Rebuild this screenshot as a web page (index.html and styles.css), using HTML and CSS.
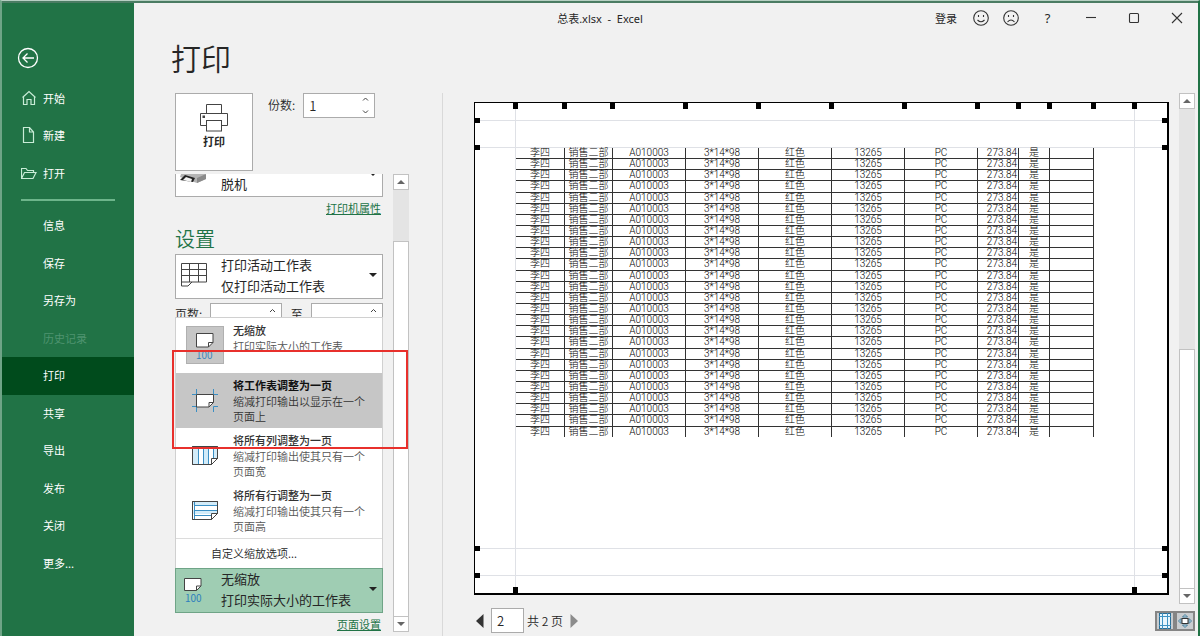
FILE: index.html
```html
<!DOCTYPE html>
<html lang="zh-CN">
<head>
<meta charset="utf-8">
<meta name="viewport" content="width=device-width, initial-scale=1">
<title>总表.xlsx - Excel</title>
<link rel="stylesheet" href="styles.css">
</head>
<body>
<div class="window">
  <nav class="sidebar" aria-label="文件">
    <button class="back" type="button" aria-label="返回">
      <svg width="22" height="22" viewBox="0 0 22 22"><circle cx="11" cy="11" r="9.5"/><path d="M17 11H6M10.500 6.500 6 11l4.500 4.500"/></svg>
    </button>
    <ul class="nav nav-main">
      <li><a href="#home"><svg width="16" height="16" viewBox="0 0 16 16"><path d="M1.500 7.500 8 1.500l6.500 6M2.500 7v7.500h3.500V9.500h4v5h3.500V7"/></svg>开始</a></li>
      <li><a href="#new"><svg width="16" height="16" viewBox="0 0 16 16"><path d="M2.500.5h6l4 4.500v10.500h-10zM8.500.5V5h4"/></svg>新建</a></li>
      <li><a href="#open"><svg width="16" height="16" viewBox="0 0 16 16"><path d="M.5 13.500v-10h4.500l1.500 2h6v2M.5 13.500l3-6h11.500l-3 6z"/></svg>打开</a></li>
    </ul>
    <hr class="nav-rule">
    <ul class="nav nav-sub">
      <li><a href="#info">信息</a></li>
      <li><a href="#save">保存</a></li>
      <li><a href="#saveas">另存为</a></li>
      <li><a class="disabled" href="#history" aria-disabled="true">历史记录</a></li>
      <li><a class="current" href="#print" aria-current="page">打印</a></li>
      <li><a href="#share">共享</a></li>
      <li><a href="#export">导出</a></li>
      <li><a href="#publish">发布</a></li>
      <li><a href="#close">关闭</a></li>
      <li><a href="#more">更多...</a></li>
    </ul>
  </nav>

  <header class="titlebar">
    <span class="doc-name">总表.xlsx&nbsp; -&nbsp; Excel</span>
    <div class="window-tools">
      <button class="sign-in" type="button">登录</button>
      <button class="face" type="button" aria-label="笑脸"><svg width="16" height="16" viewBox="0 0 16 16"><circle cx="8" cy="8" r="7.300"/><path d="M5.500 5v2M10.500 5v2M4.500 10q3.500 3.500 7 0"/></svg></button>
      <button class="face" type="button" aria-label="哭脸"><svg width="16" height="16" viewBox="0 0 16 16"><circle cx="8" cy="8" r="7.300"/><path d="M5.500 5v2M10.500 5v2M4.500 12q3.500-4 7 0"/></svg></button>
      <button class="win-btn help" type="button">?</button>
      <button class="win-btn" type="button" aria-label="最小化"><svg width="12" height="12" viewBox="0 0 12 12"><path d="M1 5.500h10"/></svg></button>
      <button class="win-btn" type="button" aria-label="最大化"><svg width="12" height="12" viewBox="0 0 12 12"><rect x="1.500" y="1.500" width="9" height="9" rx="1"/></svg></button>
      <button class="win-btn" type="button" aria-label="关闭"><svg width="12" height="12" viewBox="0 0 12 12"><path d="M1 1l10 10M11 1 1 11"/></svg></button>
    </div>
  </header>

  <main class="main">
    <h1 class="page-title">打印</h1>
    <div class="columns">
      <section class="settings">
        <div class="print-row">
          <button class="print-btn" type="button">
            <svg width="28" height="28" viewBox="0 0 28 28"><path d="M6.500 9.500v-9h15v9M6.500 21.500h-6v-12h27v12h-6"/><rect x="6.500" y="16.500" width="15" height="10.500"/><rect class="lamp" x="3" y="12" width="1.500" height="1.500"/></svg>
            打印
          </button>
          <label class="copies-label" for="copies">份数:</label>
          <div class="spin">
            <input id="copies" type="text" value="1">
            <span class="spin-arrows"><svg width="7" height="19" viewBox="0 0 7 19"><path d="M1 4.500 3.500 2 6 4.500M1 14.500 3.500 17 6 14.500"/></svg></span>
          </div>
        </div>

        <div class="scroll-area">
          <div class="options">
            <div class="printer-clip">
              <button class="printer" type="button">
                <svg width="30" height="14" viewBox="0 0 30 14"><path fill="#b4b4b4" d="M3 0h20l4 4v4l-9 4-6-2L1 6z"/><path fill="#8a8a8a" d="M18 7l9-4v5l-9 4z"/><path fill="#222" d="M1 9 6 4l10 3-2 4z"/><path fill="#f2f2f2" d="M4 9l3-3 6 2-1 3z"/></svg>
                <span>脱机</span>
                <i class="caret"></i>
              </button>
            </div>
            <a class="link" href="#printer">打印机属性</a>
            <h2 class="section-title">设置</h2>
            <button class="combo" type="button" aria-haspopup="listbox">
              <svg class="combo-icon" width="28" height="26" viewBox="0 0 28 26"><path class="ink" d="M1.500 1.500h25v18.500H12l-4 4H1.500zM1.500 7.500h25M1.500 13.500h25M9.500 1.500v18.500M18.500 1.500v18.500M1.500 20H12"/></svg>
              <span class="combo-text"><span>打印活动工作表</span><span>仅打印活动工作表</span></span>
              <i class="caret"></i>
            </button>
            <div class="pages-row">
              <label for="from">页数:</label>
              <div class="spin"><input id="from" type="text"><span class="spin-arrows"><svg width="7" height="19" viewBox="0 0 7 19"><path d="M1 6 3.500 3.500 6 6M1 14.500 3.500 17 6 14.500"/></svg></span></div>
              <label for="to">至</label>
              <div class="spin"><input id="to" type="text"><span class="spin-arrows"><svg width="7" height="19" viewBox="0 0 7 19"><path d="M1 6 3.500 3.500 6 6M1 14.500 3.500 17 6 14.500"/></svg></span></div>
            </div>

            <div class="scaling">
              <div class="menu" role="listbox" aria-label="缩放">
                <button class="item" type="button" role="option" aria-selected="true">
                  <span class="item-icon picked"><svg width="28" height="32" viewBox="0 0 28 32"><path class="sheet" d="M5.500 4.500h16.500v9l-4.500 4.500h-12z"/><path class="ink" d="M17.500 18v-4.500h4.500"/><text x="5" y="30">100</text></svg></span>
                  <span class="item-text"><b>无缩放</b><span>打印实际大小的工作表</span></span>
                </button>
                <button class="item active" type="button" role="option" aria-selected="false">
                  <span class="item-icon"><svg width="28" height="28" viewBox="0 0 28 28"><path class="blue" d="M1 8.500h4.500V3M22.500 3v5.500H27M1 20.500h4.500V26M22.500 26v-5.500H27"/><path class="sheet" d="M5.500 8.500h17v8l-4.500 4.500H5.500z"/><path class="ink" d="M18 21v-4.500h4.500"/></svg></span>
                  <span class="item-text"><b>将工作表调整为一页</b><span>缩减打印输出以显示在一个页面上</span></span>
                </button>
                <button class="item" type="button" role="option" aria-selected="false">
                  <span class="item-icon"><svg width="28" height="28" viewBox="0 0 28 28"><path class="sheet" d="M1.500 5.500h25v12l-6 6h-19z"/><path class="tint" d="M2 6h5v17H2zM12 6h5v17h-5zM22 6h4v11h-4z"/><path class="blue" d="M7.500 5.500v18M12.500 5.500v18M17.500 5.500v18M22.500 5.500v12"/><path class="ink" d="M1.500 5.500h25v12l-6 6h-19z"/><path class="sheet" d="M20.500 23.500v-6h6z"/></svg></span>
                  <span class="item-text"><b>将所有列调整为一页</b><span>缩减打印输出使其只有一个页面宽</span></span>
                </button>
                <button class="item" type="button" role="option" aria-selected="false">
                  <span class="item-icon"><svg width="28" height="28" viewBox="0 0 28 28"><path class="sheet" d="M1.500 5.500h25v12l-6 6h-19z"/><path class="tint" d="M2 6h24v3H2zM2 14h24v4H2z"/><path class="blue" d="M3.500 5.500v18M3.500 9.500h23M3.500 14.500h23M3.500 19.500h17"/><path class="ink" d="M1.500 5.500h25v12l-6 6h-19z"/><path class="sheet" d="M20.500 23.500v-6h6z"/></svg></span>
                  <span class="item-text"><b>将所有行调整为一页</b><span>缩减打印输出使其只有一个页面高</span></span>
                </button>
                <button class="custom" type="button">自定义缩放选项...</button>
              </div>
              <button class="combo open" type="button" aria-haspopup="listbox" aria-expanded="true">
                <svg class="combo-icon" width="28" height="32" viewBox="0 0 28 32"><path class="sheet" d="M4.500 5.500H21v7.500L16.500 17.500h-12z"/><path class="ink" d="M16.500 17.500V13H21"/><text x="5" y="29">100</text></svg>
                <span class="combo-text"><span>无缩放</span><span>打印实际大小的工作表</span></span>
                <i class="caret"></i>
              </button>
            </div>
            <a class="link" href="#page-setup">页面设置</a>
          </div>
          <div class="scrollbar settings-bar">
            <button type="button" aria-label="向上"><i class="tri up"></i></button>
            <div class="track"><div class="thumb"></div></div>
            <button type="button" aria-label="向下"><i class="tri down"></i></button>
          </div>
        </div>
      </section>

      <section class="preview" aria-label="打印预览">
        <div class="stage">
          <div class="paper">
            <svg class="guides" viewBox="0 0 692 490" preserveAspectRatio="none" aria-hidden="true">
              <path class="guide" d="M40.500 0v490M659.500 0v490M0 17.500h692M0 44.500h692M0 445.500h692M0 472.500h692"/>
              <g id="handles"></g>
            </svg>
            <table class="sheet-table">
              <colgroup><col class="c-name"><col class="c-dept"><col class="c-wide"><col class="c-wide"><col class="c-wide"><col class="c-wide"><col class="c-wide"><col class="c-price"><col class="c-flag"><col class="c-blank"></colgroup>
              <tbody id="rows"></tbody>
            </table>
          </div>
          <div class="scrollbar preview-bar">
            <button type="button" aria-label="上一页"><i class="tri up"></i></button>
            <div class="track"><div class="thumb"></div></div>
            <button type="button" aria-label="下一页"><i class="tri down"></i></button>
          </div>
        </div>
        <footer class="pager">
          <button class="turn" type="button" aria-label="前一页"><svg width="8" height="14" viewBox="0 0 8 14"><path fill="#333" d="M7.500 0v14L0 7z"/></svg></button>
          <input class="page-no" type="text" value="2" aria-label="页码">
          <span class="page-total">共 2 页</span>
          <button class="turn" type="button" aria-label="后一页"><svg width="8" height="14" viewBox="0 0 8 14"><path fill="#8c8c8c" d="M.5 0v14L8 7z"/></svg></button>
          <div class="views">
            <button type="button" aria-label="显示边距"><svg width="14" height="16" viewBox="0 0 14 16"><rect x="1.500" y=".5" width="11" height="15" fill="#e8f6fd" stroke="#2b6f96"/><path stroke="#3e93c4" fill="none" d="M4.500 0v16M9.500 0v16M1 3.500h12M1 12.500h12"/></svg></button>
            <button type="button" aria-label="缩放到页面"><svg width="14" height="14" viewBox="0 0 14 14"><path stroke="#4b7d97" fill="#b9dcec" d="M7 .5 9.500 3h-5zM7 13.500 9.500 11h-5zM.5 7 3 4.500v5zM13.500 7 11 4.500v5z"/><rect x="4" y="4.500" width="6" height="5" fill="#fff" stroke="#333"/></svg></button>
          </div>
        </footer>
      </section>
    </div>
  </main>
</div>
<script src="script.js"></script>
</body>
</html>
```
FILE: styles.css
```css
* { box-sizing: border-box; }

body {
  margin: 0;
  font-family: "Noto Sans CJK SC", sans-serif;
  font-size: 11px;
  font-weight: 350;
  color: #262626;
  background: #f1f1f1;
}

button, input {
  font: inherit;
  color: inherit;
  margin: 0;
  padding: 0;
  border: 0;
  background: none;
  border-radius: 0;
}

svg { display: block; flex: none; }
ul { list-style: none; margin: 0; padding: 0; }

.window {
  display: grid;
  grid-template-columns: 132px 1fr;
  grid-template-rows: 30px 1fr;
  min-height: 100vh;
  border-left: 2px solid #6fa487;
  border-right: 2px solid #217346;
  border-top: 1px solid #b7d0c3;
  box-shadow: inset 0 2px #4b7c63;
  padding-top: 2px;
}

/* Sidebar */
.sidebar {
  grid-column: 1;
  grid-row: 1 / -1;
  background: #217346;
  color: #fff;
  font-weight: 400;
}

.back { display: block; margin: 44px 0 10px 15px; }
.sidebar svg { fill: none; stroke: #fff; stroke-width: 1.3; }
.nav svg { stroke: #c9ecd7; stroke-width: 1.2; }

.nav { display: grid; grid-auto-rows: 1fr; }
.nav-main { height: 113px; }
.nav-sub { height: 375px; }

.nav a {
  display: flex;
  align-items: center;
  gap: 6px;
  height: 100%;
  padding: 0 0 1px 41px;
  color: #fff;
  text-decoration: none;
}
.nav-main a { padding: 0 0 0 19px; }
.nav .current { background: #004b1c; }
.nav .disabled { color: #4f9470; }

.nav-rule {
  height: 2px;
  margin: 7px 19px 6px;
  border: 0;
  background: #6db58b;
}

/* Title bar */
.titlebar {
  grid-column: 1 / -1;
  grid-row: 1;
  display: grid;
  grid-template-columns: 1fr auto 1fr;
  align-items: center;
  font-family: "Noto Sans", "Noto Sans CJK SC", sans-serif;
  font-weight: 400;
}
.doc-name { grid-column: 2; }
.window-tools {
  display: flex;
  align-items: center;
  justify-content: flex-end;
}
.window-tools svg { fill: none; stroke: #333; stroke-width: 1.1; }
.sign-in { margin-right: 9px; }
.face { width: 30px; display: grid; place-items: center; }
.win-btn { width: 43px; display: grid; place-items: center; }
.help { font-size: 13px; }

/* Page */
.main {
  grid-column: 2;
  grid-row: 2;
  display: flex;
  flex-direction: column;
}
.page-title {
  margin: 6px 0 18px 37px;
  font-size: 30px;
  line-height: 36px;
  font-weight: 350;
}
.columns { flex: 1; display: flex; }

.settings {
  width: 268px;
  margin-left: 41px;
  border-right: 1px solid #d9d9d9;
  padding-bottom: 4px;
  display: flex;
  flex-direction: column;
  gap: 3px;
}
.print-row { display: flex; }
.print-btn {
  width: 78px;
  height: 78px;
  padding-bottom: 12px;
  border: 1px solid #ababab;
  background: #fff;
  display: flex;
  flex-direction: column;
  align-items: center;
  justify-content: center;
  gap: 1px;
  font-weight: 700;
}
.print-btn svg { fill: #fff; stroke: #444; }
.print-btn .lamp { fill: #444; }
.copies-label { margin: 4px 8px 0 15px; font-size: 12px; line-height: 16px; }

.spin {
  display: flex;
  align-items: center;
  width: 72px;
  height: 25px;
  border: 1px solid #ababab;
  background: #fff;
}
.spin input { flex: 1; min-width: 0; padding-left: 5px; font-size: 13px; }
.spin-arrows { padding-right: 5px; }
.spin svg { fill: none; stroke: #444; }

.scroll-area { flex: 1; display: flex; gap: 10px; }
.options {
  width: 208px;
  display: flex;
  flex-direction: column;
}

.printer-clip {
  height: 23px;
  overflow: hidden;
  display: flex;
  flex-direction: column;
  justify-content: flex-end;
}
.printer {
  flex: none;
  height: 44px;
  padding: 0 5px 3px 3px;
  border: 1px solid #ababab;
  background: #fff;
  display: flex;
  align-items: flex-end;
  gap: 12px;
  font-size: 13px;
  line-height: 18px;
  font-weight: 400;
}
.printer svg { margin-bottom: 8px; }
.printer .caret { margin: 0 0 17px auto; }

.link {
  align-self: flex-end;
  margin: 3px 2px 0 0;
  line-height: 16px;
  font-weight: 400;
  color: #217346;
}
.section-title {
  margin: 9px 0 1px;
  font-size: 20px;
  line-height: 28px;
  font-weight: 350;
  color: #217346;
}

.combo {
  width: 100%;
  height: 45px;
  padding: 0 5px 3px 4px;
  border: 1px solid #ababab;
  background: #fff;
  display: flex;
  align-items: center;
  gap: 13px;
  font-size: 13px;
  line-height: 21px;
  font-weight: 400;
  text-align: left;
}
.combo.open { background: #9fcdb3; border-color: #6fa487; }
.combo-text { flex: 1; display: grid; }
.caret {
  flex: none;
  border: 4px solid transparent;
  border-top-color: #222;
  border-bottom: 0;
}

.pages-row {
  display: flex;
  justify-content: space-between;
  margin-top: 4px;
  font-size: 12px;
  line-height: 22px;
}

.ink { fill: none; stroke: #444; }
.sheet { fill: #fff; stroke: #444; }
.blue { fill: none; stroke: #3b8fc4; }
.tint { fill: #d3ecf9; }
.combo text, .item text {
  font-family: "Noto Sans CJK SC", sans-serif;
  font-size: 10px;
  fill: #2f7fbd;
}

/* Scaling menu */
.scaling { position: relative; margin-top: auto; }
.menu {
  position: absolute;
  bottom: 100%;
  left: 0;
  right: 0;
  border: 1px solid #d0d0d0;
  border-bottom: 0;
  background: #fff;
}
.item {
  position: relative;
  display: flex;
  width: 100%;
  height: 55px;
  padding: 4px 7px 0 10px;
  gap: 9px;
  text-align: left;
  line-height: 15px;
}
.item-icon {
  flex: none;
  width: 38px;
  height: 38px;
  margin-top: 4px;
  display: grid;
  place-items: center;
}
.item-icon.picked { background: #c6c6c6; border: 1px solid #b0b0b0; }
.item-text { display: flex; flex-direction: column; color: #555; }
.item-text b { color: #333; font-weight: 500; line-height: 17px; }
.active { background: #c6c6c6; }
.active .item-text { color: #333; }
.active b { color: #111; font-weight: 700; }
.active::after {
  content: "";
  position: absolute;
  z-index: 2;
  inset: -23px -26px -21px -4px;
  border: 2px solid #e8302c;
  pointer-events: none;
}
.custom {
  display: block;
  width: 100%;
  height: 30px;
  padding: 0 0 2px 35px;
  border-top: 1px solid #dcdcdc;
  text-align: left;
}

/* Scroll bars */
.scrollbar { width: 16px; display: flex; flex-direction: column; }
.scrollbar button {
  height: 16px;
  border: 1px solid #c2c2c2;
  background: #fff;
  display: grid;
  place-items: center;
}
.track { flex: 1; display: flex; flex-direction: column; justify-content: flex-end; background: #e4e4e4; }
.thumb { border: 1px solid #c2c2c2; border-bottom: 0; background: #fff; }
.settings-bar .thumb { height: 88%; }
.preview-bar .thumb { height: 50%; }
.tri { border: 4px solid transparent; }
.tri.up { border-bottom-color: #666; border-top: 0; }
.tri.down { border-top-color: #666; border-bottom: 0; }

/* Preview */
.preview {
  flex: 1;
  padding: 0 3px 3px 31px;
  display: flex;
  flex-direction: column;
  gap: 4px;
}
.stage { flex: 1; display: flex; gap: 10px; }
.paper {
  position: relative;
  flex: 1;
  margin: 9px 0;
  padding-top: 45px;
  border: solid #000;
  border-width: 1px 2px 2px 1px;
  background: #fff;
  display: grid;
  grid-template-columns: 41fr 578fr 73fr;
  align-items: start;
}
.guides { position: absolute; inset: 0; width: 100%; height: 100%; }
.guide { fill: none; stroke: #dfe1e6; }

.sheet-table {
  grid-column: 2;
  position: relative;
  width: 100%;
  height: 289px;
  table-layout: fixed;
  border-collapse: separate;
  border-spacing: 0;
  font-family: Roboto, "Noto Sans CJK SC", sans-serif;
  font-size: 10px;
  line-height: 10px;
  font-weight: 300;
  color: #000;
  text-align: center;
  white-space: nowrap;
}
.sheet-table td {
  padding: 0;
  border-right: 1px solid #333;
  border-bottom: 1px solid #333;
}
.sheet-table tr:last-child td { border-bottom: 0; }
.sheet-table .price { text-align: right; padding-right: 1px; }
.c-name { width: 49px; }
.c-dept { width: 48px; }
.c-wide { width: 73px; }
.c-price { width: 41px; }
.c-flag { width: 31px; }
.c-blank { width: 44px; }

.pager { display: flex; align-items: center; height: 25px; padding-left: 2px; font-size: 12px; }
.page-no {
  width: 33px;
  height: 25px;
  margin: 0 3px 0 7px;
  padding-left: 5px;
  border: 1px solid #ababab;
  background: #fff;
  font-size: 13px;
}
.page-total { margin-right: 7px; }
.views { display: flex; margin-left: auto; }
.views button {
  width: 20px;
  height: 20px;
  border: 2px solid #858585;
  background: #c9cdd0;
  display: grid;
  place-items: center;
}
```
FILE: script.js
```js
const record = ["李四", "销售二部", "A010003", "3*14*98", "红色", "13265", "PC", "273.84", "是", ""];
const rows = document.getElementById("rows");
for (let i = 0; i < 26; i++) {
  const tr = rows.insertRow();
  record.forEach((value, column) => {
    const td = tr.insertCell();
    td.textContent = value;
    if (column === 7) td.className = "price";
  });
}

// Drag handles for the column edges and the page margins
const handles = document.getElementById("handles");
const addHandle = (x, y, width, height) => {
  const rect = document.createElementNS("http://www.w3.org/2000/svg", "rect");
  Object.entries({ x, y, width, height }).forEach(([key, value]) => rect.setAttribute(key, value));
  handles.append(rect);
};
[40, 89, 137, 210, 283, 356, 429, 502, 543, 574, 618, 659].forEach(x => addHandle(x - 2, 0, 5, 6));
[40, 659].forEach(x => addHandle(x - 2, 484, 5, 6));
[17, 44, 445, 472].forEach(y => {
  addHandle(0, y - 2, 5, 5);
  addHandle(687, y - 2, 5, 5);
});
```
